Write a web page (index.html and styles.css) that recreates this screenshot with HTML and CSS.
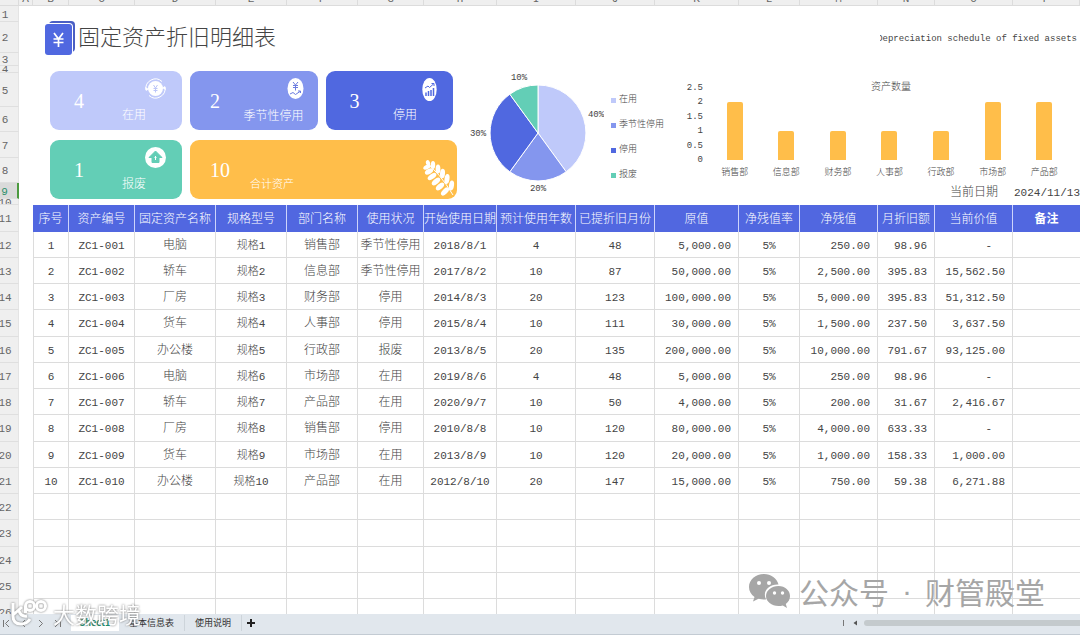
FILE: index.html
```
<!doctype html>
<html lang="zh-CN">
  <head>
    <meta charset="utf-8" />
    <title>固定资产折旧明细表</title>
    <link rel="stylesheet" href="styles.css">
  </head>
  <body>
    <div class="columns" aria-hidden="true">
      <span></span><span>A</span><span>B</span><span>C</span><span>D</span><span>E</span><span>F</span><span>G</span><span>H</span><span>I</span><span>J</span><span>K</span><span>L</span><span>M</span><span>N</span><span>O</span><span>P</span>
    </div>

    <div class="workspace">
      <div class="gutter" aria-hidden="true">
        <span>1</span><span>2</span><span>3</span><span>4</span><span>5</span><span>6</span><span>7</span><span>8</span><span class="active">9</span><span>10</span><span>11</span>
        <span>12</span><span>13</span><span>14</span><span>15</span><span>16</span><span>17</span><span>18</span><span>19</span><span>20</span><span>21</span><span>22</span><span>23</span><span>24</span><span>25</span><span>26</span>
      </div>

      <main class="sheet">
        <header class="heading">
          <svg class="logo" width="30" height="35" viewBox="0 0 30 35">
            <rect x="4" y="0" width="26" height="31" rx="4" fill="#4a5fc4" />
            <rect x="1" y="2" width="27" height="32" rx="4" fill="#fff" />
            <rect x="0" y="3" width="27" height="31" rx="3" fill="#5068e0" />
            <path d="M9 12l4.500 6 4.500-6M13.500 18v8M8.500 18h10M8.500 21.500h10" fill="none" stroke="#fff" stroke-width="1.700" />
          </svg>
          <h1>固定资产折旧明细表</h1>
          <p class="subtitle"><span>Depreciation schedule of fixed assets</span></p>
        </header>

        <section class="dashboard">
          <div class="cards">
            <div class="card in-use">
              <b>4</b>
              <div class="card-side">
                <svg width="21" height="21" viewBox="0 0 21 21">
                  <circle cx="10.500" cy="10.500" r="7.500" fill="#fff" />
                  <path d="M1 12a9.600 9.600 0 0 1 16-8.500M20 9a9.600 9.600 0 0 1-16 8.500" fill="none" stroke="#fff" />
                  <path d="M0 9l1 4 3-2zM21 12l-1-4-3 2z" fill="#fff" />
                  <path d="M8.500 7l2 3 2-3M10.500 10v4.500M8.500 10.500h4M8.500 12.500h4" fill="none" stroke="#bcc6f8" />
                </svg>
                <span>在用</span>
              </div>
            </div>
            <div class="card seasonal">
              <b>2</b>
              <div class="card-side">
                <svg width="17" height="21" viewBox="0 0 17 21">
                  <ellipse cx="8.500" cy="10.500" rx="8" ry="10.500" fill="#fff" />
                  <path d="M6 4l2.500 3L11 4M8.500 7v5.500M6 7.500h5M6 9.500h5M3 16l3-1.500 2.500 2L13 13.500M11 13h2.500v2" fill="none" stroke="#6b7ce0" />
                </svg>
                <span>季节性停用</span>
              </div>
            </div>
            <div class="card stopped">
              <b>3</b>
              <div class="card-side">
                <svg width="15" height="23" viewBox="0 0 15 23">
                  <ellipse cx="7.500" cy="11.500" rx="7.200" ry="11.500" fill="#fff" />
                  <path d="M3 10l3-2 1.500 1.500L11.500 6M9.500 5.500H12V8" fill="none" stroke="#5068e0" />
                  <path d="M4 18v-3.500M6.500 18v-5M9 18v-6M11.500 18v-8" stroke="#5068e0" stroke-width="1.500" />
                </svg>
                <span>停用</span>
              </div>
            </div>
          </div>
          <div class="cards">
            <div class="card scrapped">
              <b>1</b>
              <div class="card-side">
                <svg width="21" height="21" viewBox="0 0 21 21">
                  <circle cx="10.500" cy="10.500" r="10.500" fill="#fff" />
                  <path d="M10.500 4l6.500 6.500h-3v5H7v-5H4z" fill="#63ceb6" stroke="#63ceb6" stroke-linejoin="round" />
                  <path d="M10.500 9v4M9.500 10.500h2" stroke="#fff" />
                </svg>
                <span>报废</span>
              </div>
            </div>
            <div class="card total">
              <b>10</b>
              <span>合计资产</span>
              <svg width="32" height="36" viewBox="0 0 32 36">
                <path d="M3 3Q16 12 30 35" fill="none" stroke="#fff" />
                <g fill="#fff">
                  <ellipse cx="4" cy="7" rx="2.200" ry="4" transform="rotate(65 4 7)" />
                  <ellipse cx="6" cy="11.500" rx="2.500" ry="4.500" transform="rotate(60 6 11.500)" />
                  <ellipse cx="9" cy="16.500" rx="2.500" ry="5" transform="rotate(55 9 16.500)" />
                  <ellipse cx="13" cy="21.500" rx="2.600" ry="5" transform="rotate(50 13 21.500)" />
                  <ellipse cx="17" cy="26.500" rx="2.600" ry="5" transform="rotate(48 17 26.500)" />
                  <ellipse cx="22" cy="31.500" rx="2.600" ry="5" transform="rotate(45 22 31.500)" />
                  <ellipse cx="5" cy="3" rx="2" ry="3" transform="rotate(-20 5 3)" />
                  <ellipse cx="10" cy="5" rx="2.200" ry="4" />
                  <ellipse cx="15" cy="9" rx="2.400" ry="4.500" />
                  <ellipse cx="19.500" cy="13.500" rx="2.500" ry="4.800" transform="rotate(5 19.500 13.500)" />
                  <ellipse cx="24" cy="19" rx="2.500" ry="5" transform="rotate(8 24 19)" />
                  <ellipse cx="28.500" cy="25.500" rx="2.500" ry="5" transform="rotate(8 28.500 25.500)" />
                </g>
              </svg>
            </div>
          </div>

          <div class="share">
            <svg width="138" height="128" viewBox="0 0 138 128" role="img" aria-label="资产状况占比">
              <g stroke="#fff">
                <path d="M72 62V14A48 48 0 0 1 100.200 100.800z" fill="#bfc9fa" />
                <path d="M72 62L100.200 100.800A48 48 0 0 1 43.800 100.800z" fill="#8496ee" />
                <path d="M72 62L43.800 100.800A48 48 0 0 1 43.800 23.200z" fill="#5068e0" />
                <path d="M72 62L43.800 23.200A48 48 0 0 1 72 14z" fill="#63ceb6" />
              </g>
              <g class="share-label">
                <text x="53" y="9">10%</text>
                <text x="130" y="46">40%</text>
                <text x="72" y="120">20%</text>
                <text x="12" y="65">30%</text>
              </g>
            </svg>
            <ul class="legend">
              <li class="in-use">在用</li>
              <li class="seasonal">季节性停用</li>
              <li class="stopped">停用</li>
              <li class="scrapped">报废</li>
            </ul>
          </div>

          <div class="chart">
            <h2>资产数量</h2>
            <div class="axis"><span>2.5</span><span>2</span><span>1.5</span><span>1</span><span>0.5</span><span>0</span></div>
            <div class="bars">
              <i style="height: 80%"></i>
              <i style="height: 40%"></i>
              <i style="height: 40%"></i>
              <i style="height: 40%"></i>
              <i style="height: 40%"></i>
              <i style="height: 80%"></i>
              <i style="height: 80%"></i>
            </div>
            <div class="names"><span>销售部</span><span>信息部</span><span>财务部</span><span>人事部</span><span>行政部</span><span>市场部</span><span>产品部</span></div>
            <p class="today"><span>当前日期</span><time datetime="2024-11-13">2024/11/13</time></p>
          </div>
        </section>

        <table class="assets">
          <colgroup>
            <col class="w36"><col class="w66"><col class="w81"><col class="w71"><col class="w71"><col class="w66"><col class="w73"><col class="w79"><col class="w79"><col class="w84"><col class="w61"><col class="w78"><col class="w57"><col class="w78"><col class="w67">
          </colgroup>
          <thead>
            <tr><th>序号<th>资产编号<th>固定资产名称<th>规格型号<th>部门名称<th>使用状况<th>开始使用日期<th>预计使用年数<th>已提折旧月份<th>原值<th>净残值率<th>净残值<th>月折旧额<th>当前价值<th>备注
          <tbody>
            <tr><td>1<td>ZC1-001<td>电脑<td>规格1<td>销售部<td>季节性停用<td>2018/8/1<td>4<td>48<td>5,000.00<td>5%<td>250.00<td>98.96<td class="nil">-<td>
            <tr><td>2<td>ZC1-002<td>轿车<td>规格2<td>信息部<td>季节性停用<td>2017/8/2<td>10<td>87<td>50,000.00<td>5%<td>2,500.00<td>395.83<td>15,562.50<td>
            <tr><td>3<td>ZC1-003<td>厂房<td>规格3<td>财务部<td>停用<td>2014/8/3<td>20<td>123<td>100,000.00<td>5%<td>5,000.00<td>395.83<td>51,312.50<td>
            <tr><td>4<td>ZC1-004<td>货车<td>规格4<td>人事部<td>停用<td>2015/8/4<td>10<td>111<td>30,000.00<td>5%<td>1,500.00<td>237.50<td>3,637.50<td>
            <tr><td>5<td>ZC1-005<td>办公楼<td>规格5<td>行政部<td>报废<td>2013/8/5<td>20<td>135<td>200,000.00<td>5%<td>10,000.00<td>791.67<td>93,125.00<td>
            <tr><td>6<td>ZC1-006<td>电脑<td>规格6<td>市场部<td>在用<td>2019/8/6<td>4<td>48<td>5,000.00<td>5%<td>250.00<td>98.96<td class="nil">-<td>
            <tr><td>7<td>ZC1-007<td>轿车<td>规格7<td>产品部<td>在用<td>2020/9/7<td>10<td>50<td>4,000.00<td>5%<td>200.00<td>31.67<td>2,416.67<td>
            <tr><td>8<td>ZC1-008<td>厂房<td>规格8<td>销售部<td>停用<td>2010/8/8<td>10<td>120<td>80,000.00<td>5%<td>4,000.00<td>633.33<td class="nil">-<td>
            <tr><td>9<td>ZC1-009<td>货车<td>规格9<td>市场部<td>在用<td>2013/8/9<td>10<td>120<td>20,000.00<td>5%<td>1,000.00<td>158.33<td>1,000.00<td>
            <tr><td>10<td>ZC1-010<td>办公楼<td>规格10<td>产品部<td>在用<td>2012/8/10<td>20<td>147<td>15,000.00<td>5%<td>750.00<td>59.38<td>6,271.88<td>
            <tr><td><td><td><td><td><td><td><td><td><td><td><td><td><td><td>
            <tr><td><td><td><td><td><td><td><td><td><td><td><td><td><td><td>
            <tr><td><td><td><td><td><td><td><td><td><td><td><td><td><td><td>
            <tr><td><td><td><td><td><td><td><td><td><td><td><td><td><td><td>
            <tr><td><td><td><td><td><td><td><td><td><td><td><td><td><td><td>
        </table>
      </main>
    </div>

    <footer class="tabs">
      <div class="tab-nav">
        <button type="button" aria-label="第一张"><svg width="9" height="9"><path d="M1.500 1v7M7 1L3.500 4.500 7 8" /></svg></button>
        <button type="button" aria-label="上一张"><svg width="9" height="9"><path d="M6 1L2.500 4.500 6 8" /></svg></button>
        <button type="button" aria-label="下一张"><svg width="9" height="9"><path d="M3 1l3.500 3.500L3 8" /></svg></button>
        <button type="button" aria-label="最后一张"><svg width="9" height="9"><path d="M7.500 1v7M2 1l3.500 3.500L2 8" /></svg></button>
      </div>
      <button type="button" class="tab current">Sheet1</button>
      <button type="button" class="tab">基本信息表</button>
      <button type="button" class="tab">使用说明</button>
      <button type="button" class="add" aria-label="新建工作表"><svg width="8" height="8"><path d="M4 0v8M0 4h8" /></svg></button>
      <div class="scroll">
        <svg width="16" height="8"><path d="M1.500 1v6" stroke="#777" /><path d="M15 1.500v5L11.500 4z" fill="#555" /></svg>
        <span class="thumb"></span>
      </div>
    </footer>

    <div class="mark mark-left">
      <svg width="38" height="28" viewBox="0 0 38 28" fill="none" stroke="#fff" stroke-width="3">
        <path d="M3 4v13q0 8 8 8 6 0 9-5M3 16L12 8M9 12q2 6 8 5" />
        <circle cx="20" cy="7" r="4.500" />
        <circle cx="31" cy="7" r="4.500" />
        <path d="M15.500 7v7" />
      </svg>
      <span>大数跨境</span>
    </div>
    <div class="mark mark-right">
      <svg width="42" height="34" viewBox="0 0 42 34">
        <path d="M15 0C6.500 0 0 5.700 0 13c0 4 2 7.500 5.500 10L4 27.500l5.500-2.800c2.500.7 5 1 7.500.8C13 17 20 10 29.500 10.500 28 4.500 22 0 15 0z" fill="#a6a6a6" />
        <path d="M29.500 12C22.500 12 17 16.500 17 22s5.500 10 12.500 10c1.500 0 3-.2 4.300-.6L38 34l-1.200-4c2.700-2 4.200-4.700 4.200-8 0-5.500-5-10-11.500-10z" fill="#a6a6a6" />
        <g fill="#fff"><circle cx="10" cy="9" r="2" /><circle cx="20" cy="9" r="2" /><circle cx="25.500" cy="19" r="1.700" /><circle cx="33.500" cy="19" r="1.700" /></g>
      </svg>
      <span>公众号</span><span class="dot">·</span><span>财管殿堂</span>
    </div>
  </body>
</html>
```
FILE: styles.css
```
* {
  box-sizing: border-box;
}

body {
  display: flex;
  flex-direction: column;
  position: relative;
  height: 100vh;
  margin: 0;
  overflow: hidden;
  background: #fff;
  color: #444;
  font: 300 12px/16px "Liberation Mono", "Noto Sans CJK SC", monospace;
}

h1, h2, p, ul {
  margin: 0;
  padding: 0;
  font-weight: 300;
}

button {
  border: 0;
  padding: 0;
  background: none;
  font: inherit;
  color: inherit;
}

/* column letters, scrolled mostly out of view */
.columns {
  flex: none;
  display: grid;
  grid-template-columns: 19px 14px 36fr 66fr 81fr 71fr 71fr 66fr 73fr 79fr 79fr 84fr 61fr 78fr 57fr 78fr 67fr;
  grid-template-rows: 5px;
  align-items: end;
  height: 6px;
  overflow: hidden;
  background: #efefef;
  border-bottom: 1px solid #dcdcdc;
  color: #666;
  font-size: 11px;
  line-height: 12px;
  text-align: center;
}

.columns span {
  height: 12px;
  border-right: 1px solid #dcdcdc;
}

.workspace {
  flex: 1;
  display: flex;
  min-height: 0;
  overflow: hidden;
}

/* row numbers */
.gutter {
  flex: none;
  display: grid;
  grid-template-rows: 16px 31px 13px 7px 34px 25px 26px 25px 16px 6px 27px;
  grid-auto-rows: 26px 26px 26px 27px;
  width: 19px;
  background: #efefef;
  color: #666;
  font-size: 11px;
}

.gutter span {
  display: flex;
  align-items: center;
  justify-content: center;
  padding-top: 2px;
  padding-right: 8px;
  overflow: hidden;
  border-bottom: 1px solid #dfdfdf;
  border-right: 1px solid #e4e4e4;
}

.gutter .active {
  background: #dadada;
  color: #2f8f6b;
  border-right: 2px solid #4c9a3f;
}

.sheet {
  flex: 1;
  min-width: 0;
  padding-left: 14px;
}

.heading {
  display: flex;
  align-items: center;
  height: 65px;
  padding-left: 12px;
}

.heading h1 {
  flex: 1;
  padding: 2px 0 0 3px;
  font-size: 22px;
  line-height: 32px;
}

.subtitle {
  display: flex;
  justify-content: flex-end;
  width: 197px;
  margin-right: 3px;
  overflow: hidden;
  font-size: 9px;
  white-space: nowrap;
}

.dashboard {
  display: grid;
  grid-template-columns: 407fr 223fr 400fr;
  grid-template-rows: 59px 59px;
  row-gap: 10px;
  height: 134px;
  padding-left: 17px;
}

.in-use { --tone: #bfc9fa; }
.seasonal { --tone: #8496ee; }
.stopped { --tone: #5068e0; }
.scrapped { --tone: #63ceb6; }
.total { --tone: #ffbe4a; }

.cards {
  grid-column: 1;
  display: flex;
  gap: 8px;
}

.cards:first-child {
  padding-right: 4px;
}

.card {
  flex: 1 0 0;
  display: flex;
  align-items: center;
  border-radius: 9px;
  background: var(--tone);
  color: #fff;
}

.card.in-use,
.card.scrapped {
  flex: none;
  width: 132px;
}

.card b {
  padding-left: 24px;
  font: 300 20px/24px "Liberation Serif", serif;
}

.card.seasonal b,
.card.total b {
  padding-left: 20px;
}

.card-side {
  flex: 1;
  display: flex;
  flex-direction: column;
  align-items: flex-end;
  justify-content: space-between;
  height: 100%;
  padding: 7px 16px 6px 0;
}

.card-side span {
  margin-right: 20px;
}

.seasonal .card-side {
  padding-bottom: 5px;
  padding-right: 14px;
}

.seasonal .card-side span {
  margin-right: 0;
}

.card.total span {
  flex: 1;
  align-self: flex-end;
  padding: 0 0 6px 20px;
  font-size: 11px;
}

.card.total svg {
  align-self: flex-end;
  margin: 0 2px 3px 0;
}

.share {
  grid-area: 1 / 2 / 3 / 3;
  display: flex;
  padding-left: 9px;
}

.share svg {
  flex: none;
}

.share-label {
  fill: #444;
  font-size: 9px;
  text-anchor: middle;
}

.legend {
  display: grid;
  grid-auto-rows: 25px;
  align-content: start;
  padding: 17px 0 0 7px;
  list-style: none;
  font-size: 9px;
  line-height: 25px;
  white-space: nowrap;
}

.legend li {
  display: flex;
  align-items: center;
  gap: 3px;
}

.legend li::before {
  content: "";
  width: 5px;
  height: 5px;
  background: var(--tone);
}

.chart {
  grid-area: 1 / 3 / 3 / 4;
  display: grid;
  grid-template: 17px 72px 25px 16px / 29px 1fr;
  font-size: 9px;
}

.chart h2 {
  grid-area: 1 / 1 / 2 / 3;
  padding: 9px 0 0 22px;
  font-size: 10px;
  text-align: center;
}

.axis {
  grid-area: 2 / 1;
  display: flex;
  flex-direction: column;
  justify-content: space-between;
  margin: -6px 6px -6px 0;
  line-height: 12px;
  text-align: right;
}

.bars,
.names {
  display: grid;
  grid-column: 2;
  grid-template-columns: repeat(7, 1fr);
  justify-items: center;
  margin-right: 10px;
}

.bars {
  grid-row: 2;
  align-items: end;
}

.bars i {
  width: 16px;
  border-radius: 2px 2px 0 0;
  background: #ffbe4a;
}

.names {
  grid-row: 3;
  align-items: center;
}

.today {
  grid-area: 4 / 1 / 5 / 3;
  display: flex;
  justify-content: flex-end;
  gap: 16px;
  font-size: 12px;
}

.today time {
  font-size: 11px;
}

.assets {
  width: 100%;
  table-layout: fixed;
  border-collapse: separate;
  border-spacing: 0;
}

.w36 { width: 36px; }
.w57 { width: 57px; }
.w61 { width: 61px; }
.w66 { width: 66px; }
.w67 { width: 67px; }
.w71 { width: 71px; }
.w73 { width: 73px; }
.w78 { width: 78px; }
.w79 { width: 79px; }
.w81 { width: 81px; }
.w84 { width: 84px; }

.assets th {
  height: 27px;
  padding: 2px 0 0;
  border-right: 1px solid #cdd4fb;
  background: #5167e0;
  color: #fff;
  font-weight: 300;
  white-space: nowrap;
}

.assets th:last-child {
  font-weight: 700;
}

.assets td {
  height: 26px;
  padding: 2px 0 0;
  border-right: 1px solid #dcdcdc;
  border-bottom: 1px solid #dcdcdc;
  font-size: 11px;
  text-align: center;
  white-space: nowrap;
}

.assets tr:nth-child(4n) td {
  height: 27px;
}

.assets td:first-child {
  border-left: 1px solid #dcdcdc;
}

.assets tr > :last-child {
  border-right: 0;
}

/* names and states are set a size larger than the figures */
.assets td:nth-child(3),
.assets td:nth-child(5),
.assets td:nth-child(6) {
  font-size: 12px;
}

.assets td:nth-child(10),
.assets td:nth-child(12),
.assets td:nth-child(13),
.assets td:nth-child(14) {
  padding-right: 7px;
  text-align: right;
}

.assets td.nil:nth-child(14) {
  padding-right: 20px;
}

.tabs {
  flex: none;
  display: flex;
  align-items: center;
  height: 21px;
  padding-bottom: 2px;
  border-bottom: 1px solid #c3cbd3;
  background: #e1e7ed;
  color: #333;
  font: 400 9px/16px "Noto Sans CJK SC", sans-serif;
}

.tabs svg {
  display: block;
  fill: none;
  stroke: #777;
}

.tab-nav {
  display: flex;
  gap: 8px;
  width: 71px;
  padding-left: 2px;
}

.tab {
  padding: 0 10px;
}

.tab + .tab {
  border-right: 1px solid #cdd4da;
}

.tab.current {
  width: 48px;
  padding: 0;
  background: #fff;
  color: #1c8a6c;
  font-weight: 700;
}

.tabs .add {
  padding: 4px 5px;
}

.tabs .add svg {
  stroke: #222;
  stroke-width: 2px;
}

.scroll {
  display: flex;
  align-items: center;
  gap: 6px;
  width: 22%;
  margin-left: auto;
}

.scroll svg {
  flex: none;
  stroke: none;
}

.thumb {
  flex: 1;
  height: 6px;
  border-radius: 3px 0 0 3px;
  background: #c4cacd;
}

.mark {
  position: absolute;
  display: flex;
  align-items: center;
  font-family: "Noto Sans CJK SC", sans-serif;
  pointer-events: none;
}

.mark-left {
  bottom: 6px;
  left: 10px;
  gap: 5px;
  color: #fff;
  font-size: 22px;
  font-weight: 400;
  line-height: 32px;
  filter: drop-shadow(0 0 1px #777);
}

.mark-right {
  right: 35px;
  bottom: 25px;
  gap: 8px;
  color: #a6a6a6;
  font-size: 30px;
  font-weight: 400;
  line-height: 38px;
}

.mark-right .dot {
  width: 20px;
  font-family: "Liberation Sans", sans-serif;
  text-align: center;
}
```
